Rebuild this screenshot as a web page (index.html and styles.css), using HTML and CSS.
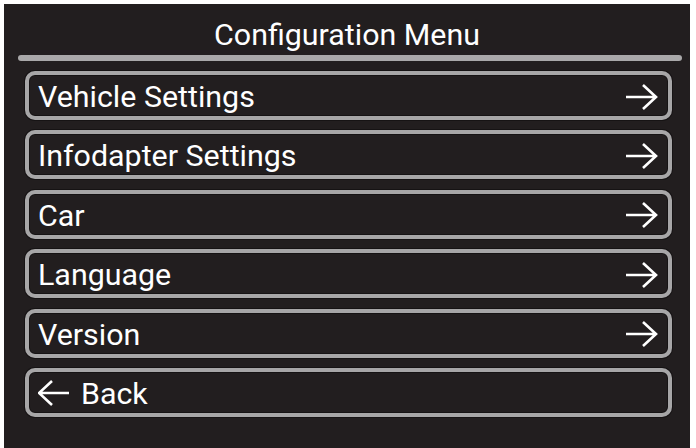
FILE: index.html
```html
<!DOCTYPE html>
<html lang="en">
<head>
    <meta charset="UTF-8">
    <title>Configuration Menu</title>
    <link rel="stylesheet" href="styles.css">
</head>
<body>
    <div class="screen">
        <div class="title">Configuration Menu</div>
        <div class="separator"></div>

        <div class="menu">
            <div class="menu-item">
                <span class="label">Vehicle Settings</span>
                <svg class="arrow" viewBox="0 0 32 26"><path d="M0 13H30M17 1L30 13L17 25"/></svg>
            </div>
            <div class="menu-item">
                <span class="label">Infodapter Settings</span>
                <svg class="arrow" viewBox="0 0 32 26"><path d="M0 13H30M17 1L30 13L17 25"/></svg>
            </div>
            <div class="menu-item">
                <span class="label">Car</span>
                <svg class="arrow" viewBox="0 0 32 26"><path d="M0 13H30M17 1L30 13L17 25"/></svg>
            </div>
            <div class="menu-item">
                <span class="label">Language</span>
                <svg class="arrow" viewBox="0 0 32 26"><path d="M0 13H30M17 1L30 13L17 25"/></svg>
            </div>
            <div class="menu-item">
                <span class="label">Version</span>
                <svg class="arrow" viewBox="0 0 32 26"><path d="M0 13H30M17 1L30 13L17 25"/></svg>
            </div>
            <div class="menu-item back">
                <svg class="arrow" viewBox="0 0 32 26"><path d="M31 13H1M14 1L1 13L14 25"/></svg>
                <span class="label">Back</span>
            </div>
        </div>
    </div>
</body>
</html>
```

FILE: styles.css
```css
body {
    margin: 0;
    padding: 0;
    background: #fff;
    font-family: Roboto, "Liberation Sans", sans-serif;
    color: #fff;
}

.screen {
    margin: 4px 6px 0 4px;
    height: 444px;
    background: #221e1f;
    overflow: hidden;
}

.title {
    height: 51px;
    line-height: 62px;
    text-align: center;
    font-size: 30.4px;
}

.separator {
    height: 6px;
    margin: 0 8px 0 14px;
    background: #a9a8a9;
    border-radius: 3px;
}

.menu {
    display: flex;
    flex-direction: column;
    gap: 10.4px;
    padding: 10px 18px 0 21px;
}

.menu-item {
    display: flex;
    align-items: center;
    justify-content: space-between;
    height: 39px;
    padding: 2px 10px 0 9px;
    border: 4px solid #a7a6a7;
    border-radius: 10px;
    box-shadow: 0 0 0 1px #161314, inset 0 0 0 1px #161314;
    font-size: 30.4px;
}

.menu-item.back {
    justify-content: flex-start;
    gap: 11px;
}

.arrow {
    width: 32px;
    height: 26px;
    fill: none;
    stroke: #fff;
    stroke-width: 2.6;
}
```
